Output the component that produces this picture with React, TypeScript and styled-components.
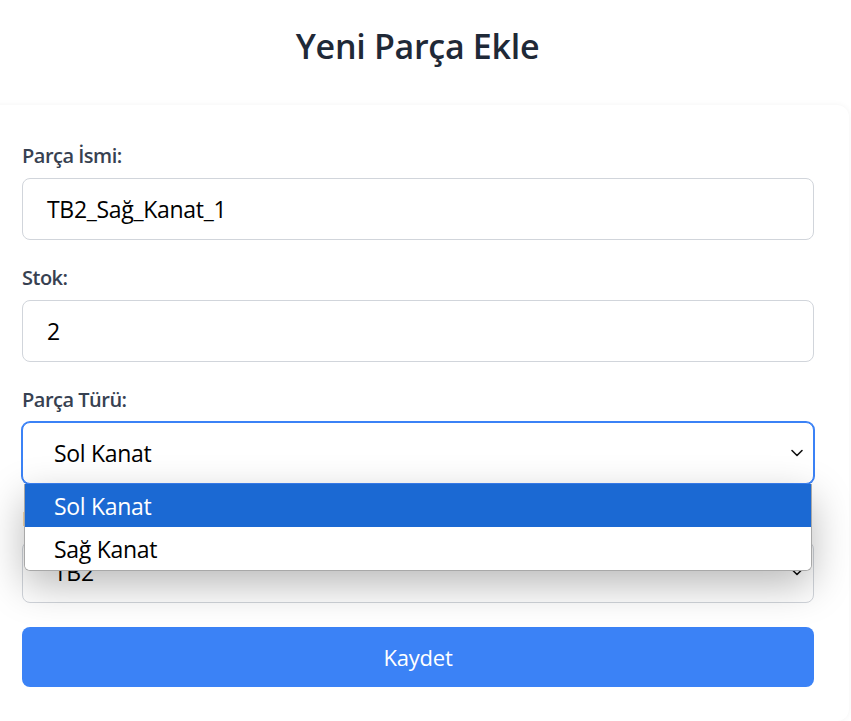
import React from "react";
import styled, { createGlobalStyle } from "styled-components";

const Global = createGlobalStyle`
  html, body { margin: 0; padding: 0; background: #ffffff; overflow: hidden; }
  body { font-family: "Open Sans", "Noto Sans", sans-serif; }
  * { box-sizing: border-box; }
`;

const Page = styled.div`
  width: 863px;
  margin-left: -14px;
`;

const Title = styled.h1`
  margin: 0;
  padding: 23px 0 36px;
  text-align: center;
  font-size: 34px;
  line-height: 46px;
  font-weight: 600;
  color: #1f2937;
  letter-spacing: -0.3px;
`;

const Card = styled.form`
  background: #ffffff;
  border-radius: 12px;
  box-shadow: 0 0 6px rgba(0, 0, 0, 0.05);
  padding: 37px 35px 34px 36px;
  display: flex;
  flex-direction: column;
`;

const Field = styled.div<{ $gapAfter?: number }>`
  display: flex;
  flex-direction: column;
  gap: 8px;
  margin-bottom: ${(p) => p.$gapAfter ?? 24}px;
  position: relative;
`;

const Label = styled.label`
  font-size: 20px;
  line-height: 28px;
  font-weight: 600;
  color: #374151;
  letter-spacing: -0.5px;
`;

const Input = styled.div`
  height: 62px;
  border: 1px solid #d1d5db;
  border-radius: 8px;
  padding: 0 24px;
  display: flex;
  align-items: center;
  font-size: 23px;
  letter-spacing: -0.3px;
  color: #000;
  background: #fff;
`;

const Select = styled.div<{ $focused?: boolean }>`
  height: 62px;
  border: 1px solid ${(p) => (p.$focused ? "#3b82f6" : "#d1d5db")};
  box-shadow: ${(p) => (p.$focused ? "0 0 0 1px #3b82f6" : "none")};
  border-radius: 8px;
  padding: 0 9px 0 31px;
  display: flex;
  align-items: center;
  justify-content: space-between;
  font-size: 23px;
  letter-spacing: -0.3px;
  color: #000;
  background: #fff;
`;

const Menu = styled.ul`
  position: absolute;
  left: 2px;
  right: 2px;
  top: 98px;
  margin: 0;
  padding: 0;
  list-style: none;
  background: #fff;
  border: 1px solid #a8a8a8;
  border-top: none;
  border-radius: 0 0 6px 6px;
  overflow: hidden;
  box-shadow: 0 14px 40px rgba(0, 0, 0, 0.28);
  z-index: 5;
`;

const Option = styled.li<{ $active?: boolean }>`
  height: 43px;
  display: flex;
  align-items: center;
  padding-left: 29px;
  font-size: 23px;
  letter-spacing: -0.3px;
  color: ${(p) => (p.$active ? "#ffffff" : "#000000")};
  background: ${(p) => (p.$active ? "#1b69d3" : "#ffffff")};
`;

const Button = styled.button`
  height: 60px;
  border: none;
  border-radius: 8px;
  background: #3b82f6;
  color: #ffffff;
  font-family: inherit;
  font-size: 22px;
  letter-spacing: -0.2px;
`;

const Chevron = () => (
  <svg width="14" height="14" viewBox="0 0 14 14" fill="none">
    <path d="M2 4.5 L7 9.5 L12 4.5" stroke="#111" strokeWidth="1.6" strokeLinecap="round" strokeLinejoin="round" />
  </svg>
);

export default function App() {
  return (
    <>
      <Global />
      <Page>
        <Title>Yeni Parça Ekle</Title>
        <Card onSubmit={(e) => e.preventDefault()}>
          <Field>
            <Label>Parça İsmi:</Label>
            <Input>TB2_Sağ_Kanat_1</Input>
          </Field>
          <Field>
            <Label>Stok:</Label>
            <Input>2</Input>
          </Field>
          <Field $gapAfter={21}>
            <Label>Parça Türü:</Label>
            <Select $focused>
              <span>Sol Kanat</span>
              <Chevron />
            </Select>
            <Menu>
              <Option $active>Sol Kanat</Option>
              <Option>Sağ Kanat</Option>
            </Menu>
          </Field>
          <Field>
            <Label>Model:</Label>
            <Select>
              <span>TB2</span>
              <Chevron />
            </Select>
          </Field>
          <Button type="submit">Kaydet</Button>
        </Card>
      </Page>
    </>
  );
}
